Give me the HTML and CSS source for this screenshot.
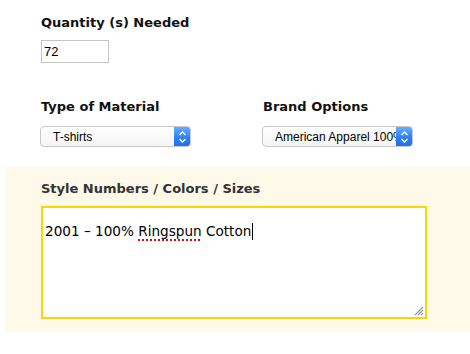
FILE: index.html
```
<!DOCTYPE html>
<html>
    <head>
        <title>Order details</title>
        <link rel="stylesheet" href="styles.css">
    </head>
    <body>
        <div class="form">
            <div class="field quantity">
                <label class="label">Quantity (s) Needed</label>
                <input type="text" class="qty-input" value="72">
            </div>

            <div class="row">
                <div class="field material">
                    <label class="label">Type of Material</label>
                    <div class="select">
                        <span class="select-text">T-shirts</span>
                        <span class="select-arrow">
                            <svg width="17" height="20" viewBox="0 0 17 20">
                                <path d="M5.5 8 L8.5 5 L11.5 8" fill="none" stroke="#fff" stroke-width="1.5"/>
                                <path d="M5.5 12 L8.5 15 L11.5 12" fill="none" stroke="#fff" stroke-width="1.5"/>
                            </svg>
                        </span>
                    </div>
                </div>
                <div class="field brand">
                    <label class="label">Brand Options</label>
                    <div class="select">
                        <span class="select-text">American Apparel 100% Cotton</span>
                        <span class="select-arrow">
                            <svg width="17" height="20" viewBox="0 0 17 20">
                                <path d="M5.5 8 L8.5 5 L11.5 8" fill="none" stroke="#fff" stroke-width="1.5"/>
                                <path d="M5.5 12 L8.5 15 L11.5 12" fill="none" stroke="#fff" stroke-width="1.5"/>
                            </svg>
                        </span>
                    </div>
                </div>
            </div>
        </div>

        <div class="styles-panel">
            <label class="label styles-label">Style Numbers / Colors / Sizes</label>
            <div class="textarea">
                <span class="textarea-text">2001 &ndash; 100% <span class="misspelled">Ringspun</span> Cotton</span><span class="caret"></span>
                <svg class="grip" width="10" height="10" viewBox="0 0 10 10">
                    <path d="M9 1 L1 9 M9 4 L4 9 M9 7 L7 9" stroke="#999" stroke-width="1.2"/>
                </svg>
            </div>
        </div>
    </body>
</html>
```
FILE: styles.css
```
body {
    margin: 0;
    font-family: "DejaVu Sans", sans-serif;
    background: #fff;
}
.form {
    padding: 15px 0 0 41px;
}
.label {
    display: block;
    font-size: 13px;
    font-weight: bold;
    line-height: 16px;
    color: #111;
}
.qty-input {
    display: block;
    margin-top: 9px;
    width: 68px;
    height: 23px;
    box-sizing: border-box;
    border: 1px solid #c4c4c4;
    padding: 0 0 0 2px;
    font-family: "Liberation Sans", sans-serif;
    font-size: 13px;
    color: #000;
    outline: none;
}
.row {
    display: flex;
    margin-top: 36px;
}
.material {
    width: 222px;
}
.select {
    display: flex;
    align-items: center;
    margin-top: 11px;
    margin-left: -1px;
    width: 151px;
    height: 21px;
    box-sizing: border-box;
    border: 1px solid #c8c8c8;
    border-radius: 4px;
    background: linear-gradient(#fff, #f4f4f4);
    overflow: hidden;
    font-family: "Liberation Sans", sans-serif;
    font-size: 12px;
    color: #000;
}
.select-text {
    flex: 1;
    padding-left: 12px;
    white-space: nowrap;
    overflow: hidden;
}
.select-arrow {
    display: flex;
    align-items: center;
    justify-content: center;
    width: 17px;
    height: 21px;
    margin-right: -1px;
    border-radius: 0 4px 4px 0;
    background: linear-gradient(#6cb0ff, #2a7cf5 60%, #1f6ef0);
}
.styles-panel {
    margin: 20px 0 0 5px;
    padding: 14px 0 13px 36px;
    background: #fef9e8;
}
.styles-label {
    color: #333;
}
.textarea {
    position: relative;
    margin-top: 9px;
    width: 386px;
    height: 113px;
    box-sizing: border-box;
    border: 2px solid #ffd400;
    background: #fff;
    padding: 14px 0 0 2px;
    font-size: 13.6px;
    line-height: 18px;
    color: #000;
}
.misspelled {
    text-decoration: underline dotted #e00;
    text-decoration-thickness: 2px;
    text-underline-offset: 3px;
}
.caret {
    display: inline-block;
    width: 1px;
    height: 17px;
    margin-left: 1px;
    vertical-align: -4px;
    background: #000;
}
.grip {
    position: absolute;
    right: 1px;
    bottom: 1px;
}
```
